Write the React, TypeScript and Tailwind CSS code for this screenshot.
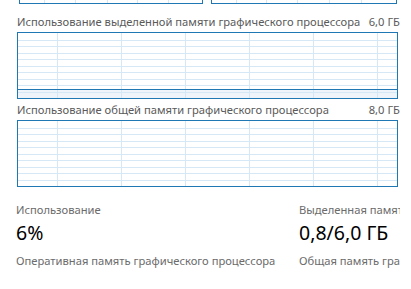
const GRID = '#d6e7f5';
const LINE = '#1f78b4';

function Grid({ width, height, rows, cols, offset, fillFrom }: { width: number; height: number; rows: number; cols: number; offset: number; fillFrom?: number }) {
  const hs = Array.from({ length: rows - 1 }, (_, i) => Math.round(((i + 1) * height) / rows) + 0.5);
  const vs = Array.from({ length: cols }, (_, i) => offset + i * 64 - 0.5).filter((x) => x > 0 && x < width);
  return (
    <svg width={width} height={height} className="block" shapeRendering="crispEdges">
      {fillFrom !== undefined && <rect x={0} y={fillFrom} width={width} height={height - fillFrom} fill="#eef4f9" />}
      {hs.map((y) => (
        <line key={'h' + y} x1={0} x2={width} y1={y} y2={y} stroke={GRID} strokeWidth={1} />
      ))}
      {vs.map((x) => (
        <line key={'v' + x} x1={x} x2={x} y1={0} y2={height} stroke={GRID} strokeWidth={1} />
      ))}
      {fillFrom !== undefined && <line x1={0} x2={width} y1={fillFrom - 0.5} y2={fillFrom - 0.5} stroke={LINE} strokeWidth={1} />}
    </svg>
  );
}

function Chart({ title, max, fillFrom }: { title: string; max: string; fillFrom?: number }) {
  return (
    <div className="flex flex-col">
      <div className="flex justify-between items-end whitespace-nowrap h-[15px] text-[11.2px] leading-[15px] text-[#5a5a5a] mb-[3px]">
        <span>{title}</span>
        <span>{max}</span>
      </div>
      <div className="border border-[#1f78b4] w-[381px] h-[67px]">
        <Grid width={379} height={65} rows={10} cols={7} offset={40} fillFrom={fillFrom} />
      </div>
    </div>
  );
}

function Stat({ label, value, sub, className }: { label: string; value: string; sub: string; className?: string }) {
  return (
    <div className={'flex flex-col whitespace-nowrap shrink-0 ' + (className ?? '')}>
      <span className="text-[11.2px] leading-[16px] text-[#6b6b6b]">{label}</span>
      <span className="text-[19.5px] leading-[26px] text-black mt-[2px]">{value}</span>
      <span className="text-[11.2px] leading-[16px] text-[#6b6b6b] mt-[7px]">{sub}</span>
    </div>
  );
}

export default function App() {
  return (
    <div className="w-[411px] h-[289px] bg-white overflow-hidden" style={{ fontFamily: '"Noto Sans", "Open Sans", sans-serif' }}>
      <div className="w-[400px] overflow-hidden">
        {/* partial graphs above, scrolled out of view */}
        <div className="flex gap-[8px] pl-[19px]">
          <div className="w-[184px] h-[4px] border-x border-b border-[#1f78b4] overflow-hidden">
            <svg width={182} height={3} className="block" shapeRendering="crispEdges">
              {[25, 56, 88, 118, 149].map((x) => (
                <line key={x} x1={x - 0.5} x2={x - 0.5} y1={0} y2={3} stroke={GRID} />
              ))}
            </svg>
          </div>
          <div className="w-[186px] h-[4px] border-x border-b border-[#1f78b4] overflow-hidden">
            <svg width={184} height={3} className="block" shapeRendering="crispEdges">
              {[25, 55, 86, 118, 150].map((x) => (
                <line key={x} x1={x - 0.5} x2={x - 0.5} y1={0} y2={3} stroke={GRID} />
              ))}
            </svg>
          </div>
        </div>

        <div className="pl-[17px] mt-[10px] flex flex-col gap-[3px]">
          <Chart title="Использование выделенной памяти графического процессора" max="6,0 ГБ" fillFrom={57} />
          <Chart title="Использование общей памяти графического процессора" max="8,0 ГБ" />
        </div>

        <div className="flex pl-[16px] mt-[15px]">
          <Stat className="w-[283px]" label="Использование" value="6%" sub="Оперативная память графического процессора" />
          <Stat label="Выделенная память графического процессора" value="0,8/6,0 ГБ" sub="Общая память графического процессора" />
        </div>
      </div>
    </div>
  );
}
